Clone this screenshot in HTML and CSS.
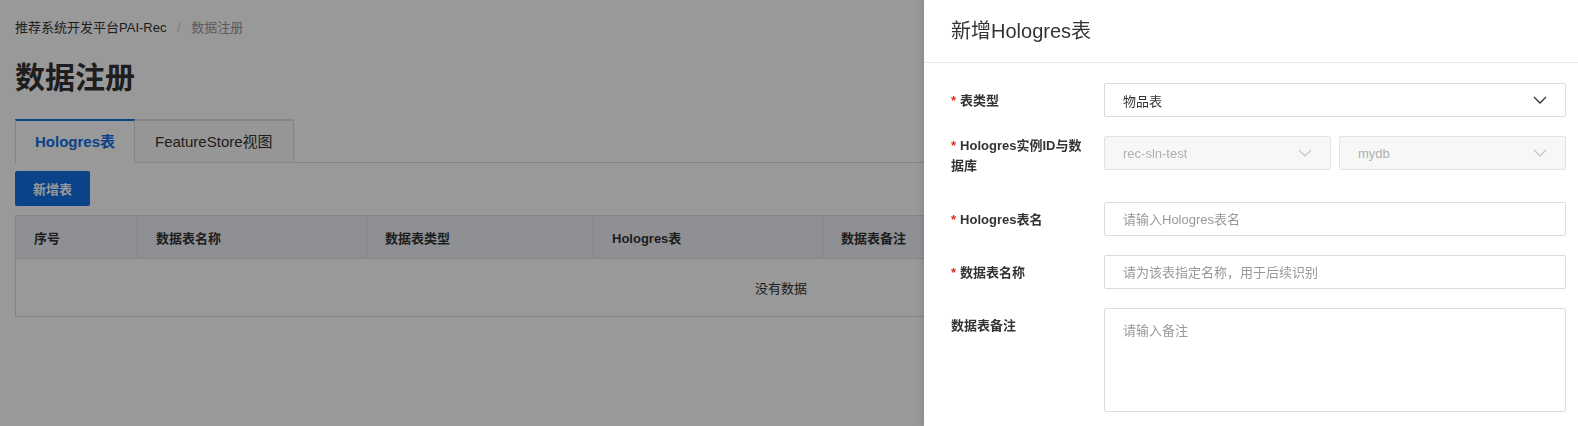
FILE: index.html
```html
<!DOCTYPE html>
<html lang="zh-CN">
<head>
    <meta charset="UTF-8">
    <title>数据注册 - 推荐系统开发平台PAI-Rec</title>
    <link rel="stylesheet" href="styles.css">
</head>
<body>
    <div class="page">
        <div class="breadcrumb">
            <span class="crumb">推荐系统开发平台PAI-Rec</span>
            <span class="sep">/</span>
            <span class="crumb current">数据注册</span>
        </div>
        <h1 class="page-title">数据注册</h1>

        <div class="tabs">
            <div class="tab active">Hologres表</div>
            <div class="tab">FeatureStore视图</div>
        </div>

        <div class="toolbar">
            <button class="btn-primary">新增表</button>
        </div>

        <table class="data-table">
            <colgroup>
                <col style="width: 122px">
                <col style="width: 229px">
                <col style="width: 227px">
                <col style="width: 229px">
                <col style="width: 240px">
                <col style="width: 240px">
                <col>
            </colgroup>
            <thead>
                <tr>
                    <th>序号</th>
                    <th>数据表名称</th>
                    <th>数据表类型</th>
                    <th>Hologres表</th>
                    <th>数据表备注</th>
                    <th>创建时间</th>
                    <th>操作</th>
                </tr>
            </thead>
            <tbody>
                <tr>
                    <td colspan="7" class="empty">没有数据</td>
                </tr>
            </tbody>
        </table>
    </div>

    <!-- dim layer behind the drawer -->
    <div class="mask"></div>

    <div class="drawer">
        <div class="drawer-header">新增Hologres表</div>
        <div class="drawer-body">
            <div class="form-item">
                <label class="form-label"><span class="required">*</span>表类型</label>
                <div class="select">
                    <span class="select-value">物品表</span>
                    <svg class="arrow" width="14" height="8" viewBox="0 0 14 8"><polyline points="1,1 7,7 13,1" fill="none" stroke="#333" stroke-width="1.3"/></svg>
                </div>
            </div>

            <div class="form-item">
                <label class="form-label wrap"><span class="required">*</span>Hologres实例ID与数据库</label>
                <div class="select-pair">
                    <div class="select disabled">
                        <span class="select-value">rec-sln-test</span>
                        <svg class="arrow" width="14" height="8" viewBox="0 0 14 8"><polyline points="1,1 7,7 13,1" fill="none" stroke="#c4c4c4" stroke-width="1.2"/></svg>
                    </div>
                    <div class="select disabled">
                        <span class="select-value">mydb</span>
                        <svg class="arrow" width="14" height="8" viewBox="0 0 14 8"><polyline points="1,1 7,7 13,1" fill="none" stroke="#c4c4c4" stroke-width="1.2"/></svg>
                    </div>
                </div>
            </div>

            <div class="form-item">
                <label class="form-label"><span class="required">*</span>Hologres表名</label>
                <input class="input" type="text" placeholder="请输入Hologres表名">
            </div>

            <div class="form-item">
                <label class="form-label"><span class="required">*</span>数据表名称</label>
                <input class="input" type="text" placeholder="请为该表指定名称，用于后续识别">
            </div>

            <div class="form-item">
                <label class="form-label">数据表备注</label>
                <textarea class="input textarea" placeholder="请输入备注"></textarea>
            </div>
        </div>
    </div>
</body>
</html>
```

FILE: styles.css
```css
body {
    margin: 0;
    font-family: "Liberation Sans", "Noto Sans CJK SC", sans-serif;
    font-size: 13px;
    color: #333;
    background-color: #fff;
    overflow: hidden;
}

.page {
    padding: 0 31px 0 15px;
}

.breadcrumb {
    padding-top: 18px;
    line-height: 20px;
    font-size: 13px;
}

.breadcrumb .sep {
    color: #c8c8c8;
    margin: 0 7px;
}

.breadcrumb .current {
    color: #999;
}

.page-title {
    margin: 20px 0 0;
    font-size: 30px;
    line-height: 40px;
    font-weight: bold;
    color: #333;
}

.tabs {
    display: flex;
    margin-top: 21px;
    border-bottom: 1px solid #dedede;
}

.tab {
    height: 41px;
    line-height: 41px;
    padding: 0 20px;
    font-size: 15px;
    color: #333;
    background-color: #fafafa;
    border: 1px solid #dedede;
    border-bottom: none;
    border-top-width: 2px;
    border-left: none;
    margin-bottom: -1px;
}

.tab:first-child {
    border-left: 1px solid #dedede;
}

.tab.active {
    padding: 0 19px;
    color: #1170e6;
    font-weight: bold;
    background-color: #fff;
    border-top-color: #1170e6;
    height: 42px;
}

.toolbar {
    margin-top: 8px;
}

.btn-primary {
    height: 35px;
    padding: 0 18px;
    border: none;
    border-radius: 2px;
    background-color: #1170e6;
    color: #fff;
    font-family: inherit;
    font-size: 13px;
    font-weight: bold;
}

.data-table {
    width: 100%;
    margin-top: 9px;
    border-collapse: collapse;
    table-layout: fixed;
    border: 1px solid #dedede;
}

.data-table th {
    height: 42px;
    padding: 0 18px;
    text-align: left;
    font-weight: bold;
    background-color: #eff1f5;
    border-left: 1px solid #dedede;
    border-bottom: 1px solid #dedede;
}

.data-table td.empty {
    height: 55px;
    text-align: center;
    color: #333;
}

.mask {
    position: fixed;
    top: 0;
    left: 0;
    right: 0;
    bottom: 0;
    background-color: rgba(0, 0, 0, 0.4);
}

.drawer {
    position: fixed;
    top: 0;
    right: 0;
    bottom: 0;
    width: 654px;
    background-color: #fff;
    box-shadow: -2px 0 6px rgba(0, 0, 0, 0.12);
}

.drawer-header {
    height: 62px;
    line-height: 62px;
    padding: 0 27px;
    font-size: 20px;
    color: #333;
    border-bottom: 1px solid #e6e6e6;
}

.drawer-body {
    padding: 20px 12px 0 27px;
}

.form-item {
    display: flex;
    align-items: flex-start;
    margin-bottom: 19px;
}

.form-label {
    width: 153px;
    flex-shrink: 0;
    box-sizing: border-box;
    padding: 8px 16px 6px 0;
    line-height: 20px;
    font-size: 13px;
    font-weight: bold;
    color: #333;
}

.form-label.wrap {
    padding-top: 0;
    padding-bottom: 7px;
}

.required {
    color: #e0281e;
    margin-right: 4px;
}

.select,
.input {
    flex: 1;
    min-width: 0;
    height: 34px;
    box-sizing: border-box;
    border: 1px solid #dcdcdc;
    border-radius: 2px;
    padding: 0 18px;
    background-color: #fff;
    font-family: inherit;
    font-size: 13px;
    color: #333;
}

.select {
    display: flex;
    align-items: center;
    justify-content: space-between;
    padding-right: 18px;
}

.select.disabled {
    background-color: #f7f7f7;
    border-color: #e3e3e3;
    color: #b0b0b0;
}

.select-pair {
    flex: 1;
    display: flex;
    gap: 8px;
}

.input::placeholder {
    color: #999;
}

.textarea {
    height: 104px;
    padding-top: 12px;
    line-height: 20px;
    resize: none;
    outline: none;
}
```
